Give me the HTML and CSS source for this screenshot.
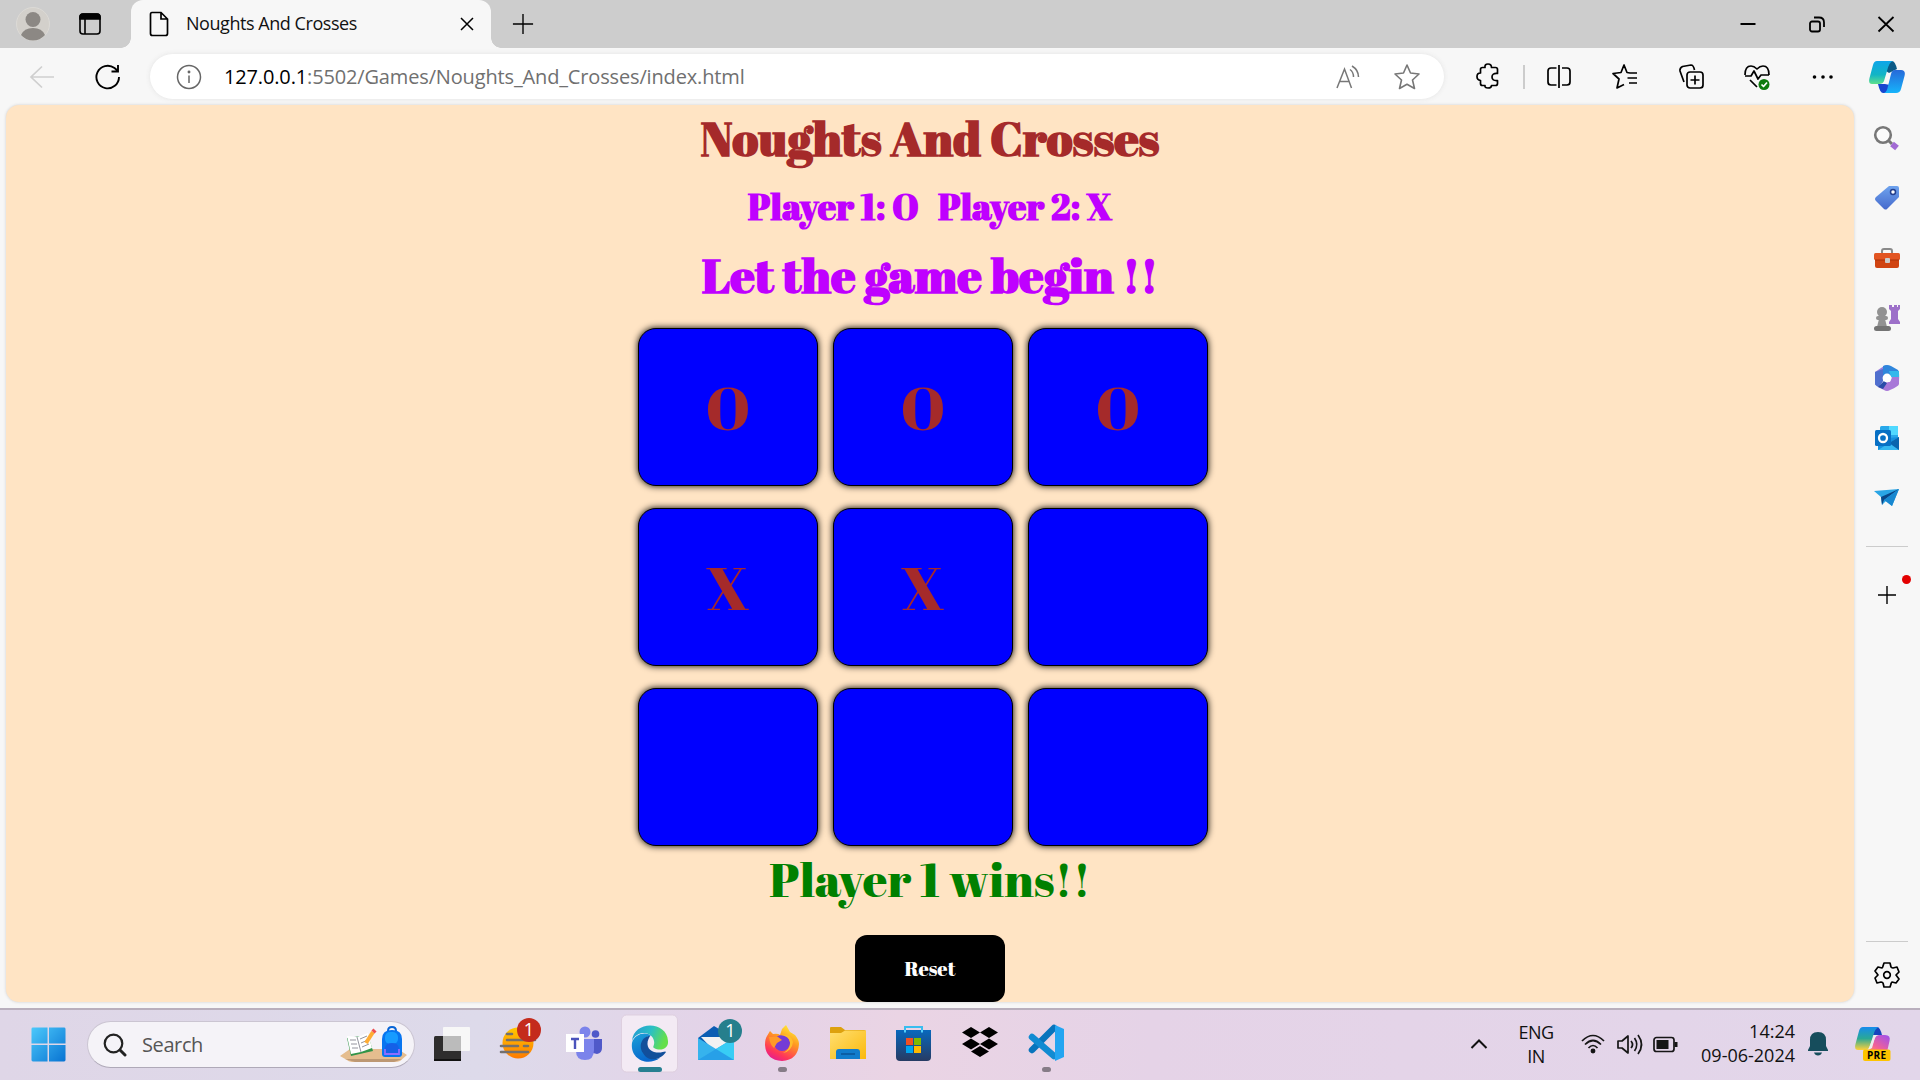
FILE: index.html
```html
<!DOCTYPE html>
<html lang="en">
<head>
<meta charset="utf-8">
<title>Noughts And Crosses</title>
<link rel="stylesheet" href="styles.css">
</head>
<body>
<header class="tabbar">
  <svg class="avatar" viewBox="0 0 34 34"><circle cx="17" cy="17" r="16.5" fill="#d3d0cb" stroke="#dcdad6"/><ellipse cx="17" cy="12.500" rx="7.500" ry="7.500" fill="#8c8884"/><path d="M5 28Q8 21 17 21T29 28Q24 33.500 17 33.500T5 28Z" fill="#8c8884"/></svg>
  <svg class="spaces" viewBox="0 0 24 24" fill="none" stroke="#000" stroke-width="1.600"><rect x="2" y="2" width="20" height="20" rx="3"/><path d="M2 5Q2 2 5 2H19Q22 2 22 5V7H2Z" fill="#000"/><path d="M7 7V22"/></svg>
  <div class="tab">
    <svg class="doc" viewBox="0 0 20 26" fill="none" stroke="#000" stroke-width="1.700"><path d="M3 1.500H12L18.500 8V22.500Q18.500 24.500 16.500 24.500H3.500Q1.500 24.500 1.500 22.500V3.500Q1.500 1.500 3 1.500ZM12 1.500V8H18.500"/></svg>
    <span class="tab-title">Noughts And Crosses</span>
    <svg class="tab-close" viewBox="0 0 14 14" stroke="#000" stroke-width="1.500"><path d="M1 1L13 13M13 1L1 13"/></svg>
  </div>
  <svg class="new-tab" viewBox="0 0 24 24" stroke="#000" stroke-width="1.500"><path d="M1 12H23M12 1V23"/></svg>
  <div class="window-buttons">
    <svg viewBox="0 0 20 20" stroke="#000" stroke-width="2"><path d="M2.500 10H17.500"/></svg>
    <svg viewBox="0 0 20 20" fill="none" stroke="#000" stroke-width="1.800"><rect x="3" y="7.500" width="10" height="10" rx="2"/><path d="M7 3.500H12Q17 3.500 17 8.500V13"/></svg>
    <svg viewBox="0 0 20 20" stroke="#000" stroke-width="1.800"><path d="M2.500 3L17.500 17.500M17.500 3L2.500 17.500"/></svg>
  </div>
</header>

<nav class="toolbar">
  <svg class="back" viewBox="0 0 26 24" fill="none" stroke="#cfcfcf" stroke-width="1.700"><path d="M25 12H2M13 1.500L2 12L13 22.500"/></svg>
  <svg class="reload" viewBox="0 0 28 28" fill="none" stroke="#000" stroke-width="1.900"><path d="M25 14A11.300 11.300 0 1 1 20.500 5L24 8M24 2V8.500H17.500"/></svg>
  <div class="address">
    <svg class="info" viewBox="0 0 26 26" fill="none" stroke="#666" stroke-width="1.500"><circle cx="13" cy="13" r="11.500"/><path d="M13 11.500V19"/><circle cx="13" cy="8" r=".7" fill="#666"/></svg>
    <span class="url"><b>127.0.0.1</b>:5502/Games/Noughts_And_Crosses/index.html</span>
    <svg class="read" viewBox="0 0 26 26" fill="none" stroke="#777" stroke-width="1.500"><path d="M2 24L9.500 5L16.500 24M5 17.500H14M15 5.500Q18.500 8 18.500 13M17 2Q23.500 6 23.500 13"/></svg>
    <svg class="star" viewBox="0 0 28 28" fill="none" stroke="#777" stroke-width="1.600" stroke-linejoin="round"><path d="M14 2L17.500 10L26 11L19.500 17L21.500 25.500L14 21.300L6.500 25.500L8.500 17L2 11L10.500 10Z"/></svg>
  </div>
  <div class="tools">
    <svg viewBox="-14 -14 28 28" class="ink"><path d="M-5.500-9.500H-3Q-3.500-13 0-13T3.500-9.500H7.500Q9.500-9.500 9.500-7.500V-3.500Q4-4 4 0T9.500 3.500V6.500Q9.500 8.500 7.500 8.500H3.500Q3.500 11 0 11T-3 8.500H-5.500Q-7.500 8.500-7.500 6.500V3.500Q-11 3-11-.5T-7.500-4V-7.500Q-7.500-9.500-5.500-9.500Z"/></svg>
    <i class="divider"></i>
    <svg viewBox="-14 -14 28 28" class="ink"><path d="M-2.500-9H-8Q-11-9-11-6V5Q-11 8-8 8H-2.500M3-9H8Q11-9 11-6V5Q11 8 8 8H3M0-12V11"/></svg>
    <svg viewBox="-14 -14 28 28" class="ink"><path d="M5-4L2-4.500L-1-12L-4-4.500L-12-3.500L-6 2L-8 11L-1 7.500M4-4H12M2.500 1H12M4 6H12"/></svg>
    <svg viewBox="-14 -14 28 28" class="ink"><rect x="-5" y="-5" width="16" height="16" rx="3"/><path d="M3-1.500V7.500M-1.500 3H7.500M-8 5L-12-6Q-12.500-9-9.500-10.500L-1-12Q1.500-12 2.500-7"/></svg>
    <svg viewBox="-14 -14 28 28" class="ink"><path d="M-12-2Q-12-11-6-11Q-3-11 0-8Q3-11 6-11Q12-11 12-2M-12-1H-6L-3-6L1 2L4-2H12M-7 3L0 10"/><circle cx="7" cy="7.500" r="5.500" fill="#107c10" stroke="none"/><path d="M4.500 7.500L6.500 9.500L10 5.500" stroke="#fff"/></svg>
    <svg viewBox="-14 -14 28 28"><circle cx="-8.500" r="1.800"/><circle r="1.800"/><circle cx="8" r="1.800"/></svg>
    <svg class="copilot" viewBox="0 0 36 32"><defs>
      <linearGradient id="cpA" x1="0" y1="0" x2="0" y2="1"><stop stop-color="#0ea5e9"/><stop offset=".6" stop-color="#12b5c5"/><stop offset="1" stop-color="#5fe08c"/></linearGradient>
      <linearGradient id="cpB" x1="0" y1="0" x2="0" y2="1"><stop stop-color="#2669d9"/><stop offset="1" stop-color="#16b4fb"/></linearGradient></defs>
      <path d="M20 0H23Q26 0 28 8L20 12L14 8Z" fill="#0b5a86"/><path d="M8 0H24Q20 1 18 10L15 20Q14 23 10 23H3Q-1 23 .5 17L4 4Q5 0 8 0Z" fill="url(#cpA)"/><path d="M9 23H16L21 24L19 32H14Q11 32 9 23Z" fill="#1746d0"/><path d="M26 9H32Q37 9 35.500 15L32 28Q31 32 27 32H15Q18 31 19 25L22 13Q23 9 26 9Z" fill="url(#cpB)"/></svg>
  </div>
</nav>

<div class="content">
  <main class="page">
    <h1 class="title">Noughts And Crosses</h1>
    <div class="players"><span>Player 1: O</span><span>Player 2: X</span></div>
    <h2 class="status">Let the game begin !!</h2>
    <div class="board">
      <div class="cell">O</div><div class="cell">O</div><div class="cell">O</div>
      <div class="cell">X</div><div class="cell">X</div><div class="cell"></div>
      <div class="cell"></div><div class="cell"></div><div class="cell"></div>
    </div>
    <div class="winner">Player 1 wins!!</div>
    <button class="reset">Reset</button>
  </main>
  <aside class="sidebar">
    <svg viewBox="-14 -14 28 28"><circle cx="-4" cy="-3" r="7.800" fill="#fff" fill-opacity=".5" stroke="#777" stroke-width="2.600"/><path d="M2 3L5 6" stroke="#777" stroke-width="3"/><path d="M5 6L10 10" stroke="#a26bd4" stroke-width="6"/></svg>
    <svg viewBox="-14 -14 28 28"><defs><linearGradient id="tg" x2="0" y2="1"><stop stop-color="#6ea3ee"/><stop offset="1" stop-color="#4569cc"/></linearGradient></defs><path d="M2-12H10Q12-12 12-10V-1L0 11Q-1 12-3 11L-11 3Q-13 1-11-1Z" fill="url(#tg)"/><circle cx="6" cy="-6" r="2.500" fill="#fff" stroke="#233f8e" stroke-width="1.500"/></svg>
    <svg viewBox="-14 -14 28 28"><path d="M-5-4V-7Q-5-9-3-9H3Q5-9 5-7V-4" fill="none" stroke="#8a8a8a" stroke-width="2"/><rect x="-12" y="-3" width="24" height="13" rx="2" fill="#d04412"/><rect x="-13" y="-5" width="26" height="7" rx="1.500" fill="#e25522"/><path d="M-12 2H12" stroke="#a9330b"/><rect x="-2" y="0" width="5" height="5" rx="1" fill="#ccc"/></svg>
    <svg viewBox="-14 -14 28 28"><g fill="#929292"><circle cx="-5" cy="-6" r="5"/><rect x="-11" y="-2" width="12" height="4" rx="2"/><path d="M-8 1H-2L0 9H-10Z"/><rect x="-13" y="8" width="17" height="5" rx="2.500" fill="#747474"/></g><path d="M2-13H5V-11H7V-13H10V-11H11V-13H13V-9L11-7V1L13 4V6H2V4L4 1V-7L2-9Z" fill="#9d70c9"/></svg>
    <svg viewBox="-14 -14 28 28"><path d="M-12-6L-3-12Q0-14 3-11L-3-3L-5 5L-12 7Z" fill="#9a7edb"/><path d="M-4-12Q0-14 4-12L11-8Q12.500-7 12 4L4-2L-1-4L-4-2Z" fill="#2f86dc"/><path d="M2-7L12-7V4L4-1Z" fill="#35b8eb"/><path d="M12-1V6Q12 8 3 12Q0 14-3 12L-9 9L-3 4H3L5-1Z" fill="#a878d8"/><path d="M-12 5V-6L-4-9V3L-8 9Q-12 8-12 5Z" fill="#506fce"/><path d="M-9 9L-3 3L0 5L-4 11Z" fill="#2b4da8"/><circle r="4.400" fill="#fff"/></svg>
    <svg viewBox="-14 -14 28 28"><rect x="-7" y="-12" width="18" height="17" rx="1.500" fill="#28a8ea"/><path d="M2-12H11V-3H2Z" fill="#50d9ff"/><path d="M-9 1L12-1V12H-9Z" fill="#1490df"/><path d="M-9 12L12-1V12Z" fill="#35b8f1"/><path d="M12 12L2 5L12-1Z" fill="#0a65ae"/><rect x="-12" y="-8" width="16" height="16" rx="1.500" fill="#0870c4"/><circle cx="-4" cy="0" r="4" fill="none" stroke="#fff" stroke-width="2.300"/></svg>
    <svg viewBox="-14 -14 28 28"><path d="M12-9L-13-7L-6-1L-5 7L-1 3L5 8Z" fill="#2aa5e5"/><path d="M12-9L-6-1L-5 7L-3 2Z" fill="#0a4687"/><path d="M12-9L-3 2L5 8Z" fill="#1787d0"/></svg>
    <i class="rule"></i>
    <svg class="add" viewBox="-10 -10 20 20"><path d="M-9 0H9M0-9V9" stroke="#000" stroke-width="1.400"/></svg>
    <i class="dot"></i>
    <div class="bottom"><i class="rule"></i>
    <svg viewBox="-14 -14 28 28" class="ink"><path d="M-3-12H3L4-8Q5-7 6-7L10-8L12-3L9 0L12 4L9 8L5 7Q4 8 4 9L3 12H-3L-4 8Q-5 7-6 7L-10 8L-12 3L-9 0L-12-4L-9-8L-5-7Q-4-8-4-9Z"/><circle r="3.300"/></svg></div>
  </aside>
</div>

<footer class="taskbar">
  <svg class="start" viewBox="0 0 36 36"><defs><linearGradient id="wn" x2="1" y2="1"><stop stop-color="#4cc9fb"/><stop offset="1" stop-color="#0873d2"/></linearGradient></defs><path d="M2 .5H17V17H.5V2Q.5 .5 2 .5ZM18.500 .5H34Q35.500 .5 35.500 2V17H18.500ZM.5 18.500H17V35.500H2Q.5 35.500 .5 34ZM18.500 18.500H35.500V34Q35.500 35.500 34 35.500H18.500Z" fill="url(#wn)"/></svg>
  <div class="search">
    <svg class="glass" viewBox="0 0 24 24" fill="none" stroke="#222"><circle cx="10.500" cy="10.500" r="8.800" stroke-width="2.200"/><path d="M17 17L22 22" stroke-width="3" stroke-linecap="round"/></svg>
    <span>Search</span>
    <svg class="school" viewBox="0 0 68 38"><path d="M0 30L10 23H58L67 29L60 35Q58 36 54 36H14Q9 36 7 34Z" fill="#e5bd8f"/><path d="M5 33L15 36H54L62 33Z" fill="#bd9873"/><path d="M7 12L28 9L33 25L11 30Z" fill="#319448"/><path d="M7 10L17 11L28 7L32 22L21 26L11 28Z" fill="#fff"/><path d="M17 11L21 26M10 14L16 14M11 18L17 18M12 22L18 22M20 13L27 10M21 17L28 14M22 21L29 18" stroke="#94949e"/><path d="M26 17L33 6" stroke="#ffac33" stroke-width="4"/><path d="M33 6L35 4" stroke="#ee4d51" stroke-width="4.500"/><path d="M48 5Q48 1 52 1T56 5" fill="none" stroke="#0865d6" stroke-width="2"/><path d="M42 13Q42 4 52 4T62 13V28Q62 31 59 31H45Q42 31 42 28Z" fill="#0875f0"/><rect x="45" y="6" width="13" height="12" rx="5" fill="#179bff"/><path d="M45 29V22Q46 17 52 17T59 22V29Z" fill="#1560e7"/><path d="M45 23V28H59V23" fill="none" stroke="#8c6dff" stroke-width="1.800"/></svg>
  </div>
  <div class="apps">
    <svg viewBox="0 0 66 60"><rect x="15" y="22" width="27" height="25" rx="1.500" fill="#2e2d2d"/><path d="M15 46H42" stroke="#111" stroke-width="2"/><rect x="24" y="13" width="27" height="24" rx="1" fill="#f7f7f7"/><path d="M24 22H42V37H24Z" fill="#bbb"/></svg>
    <svg viewBox="0 0 66 60"><defs><linearGradient id="or" x2="0" y2="1"><stop stop-color="#ffc900"/><stop offset="1" stop-color="#ff7b00"/></linearGradient></defs><circle cx="33" cy="29" r="15.500" fill="url(#or)"/><path d="M22 20H27M22 26H50M16 32H33M39 32H43M16 38H43" stroke="#74706d" stroke-width="2.600" stroke-linecap="round"/><circle cx="44" cy="16" r="12" fill="#c42b1c"/><text x="44" y="22" class="count">1</text></svg>
    <svg viewBox="0 0 66 60"><circle cx="34" cy="18" r="5.500" fill="#7b83eb"/><circle cx="44.500" cy="20" r="3.800" fill="#5059c9"/><path d="M35 25H51V34Q51 39 46 40L38 38Z" fill="#5059c9"/><path d="M25 25H43V36Q43 46 34 46Q25 46 25 37Z" fill="#7b83eb"/><rect x="15" y="20" width="18" height="18" fill="#fff"/><path d="M20 25H28M24 25V35" stroke="#4b53bc" stroke-width="2.400"/></svg>
    <svg viewBox="0 0 66 60" class="active"><defs><linearGradient id="ed" x2="1" y2=".3"><stop stop-color="#2398d5"/><stop offset=".55" stop-color="#2bc0c4"/><stop offset="1" stop-color="#64df4b"/></linearGradient><linearGradient id="ee" x2=".4" y2="1"><stop stop-color="#1ca1d7"/><stop offset="1" stop-color="#0867cd"/></linearGradient></defs><rect x="4.500" y="1" width="56" height="57" rx="5" fill="#f3eaf4" stroke="#decfdf"/><path d="M15 27C17 6 50 7 51 27C52 34 44 38 37 34C35 33 38 31 37 27C35 17 20 16 15 27Z" fill="url(#ed)"/><path d="M15 29C17 20 29 17 34 22C27 22 23 29 26 36C29 43 37 46 43 44C30 53 13 45 15 29Z" fill="url(#ee)"/><path d="M33 22C25 22 21 32 26 39C31 49 44 46 49 38C48 36 45 40 37 38C31 36 28 30 33 22Z" fill="#124f9b"/><rect x="21" y="53" width="24" height="5" rx="2.500" fill="#267f91"/></svg>
    <svg viewBox="0 0 66 60"><path d="M15 24L31 12L51 24V46H15Z" fill="#0b5db3"/><path d="M18 23H48V36L33 39Z" fill="#f2f2f2"/><path d="M15 24L51 46H15Z" fill="#36b3ed"/><path d="M15 46L51 24V46Z" fill="#27a0e8"/><path d="M33 35L51 24V46Z" fill="#38cdf5"/><circle cx="47" cy="17" r="12" fill="#267f8d"/><text x="47.500" y="23" class="count">1</text></svg>
    <svg viewBox="0 0 66 60"><defs><linearGradient id="ff" x1=".8" x2=".3" y2="1"><stop stop-color="#fff43a"/><stop offset=".4" stop-color="#ff9a20"/><stop offset=".8" stop-color="#ff3659"/><stop offset="1" stop-color="#e41d91"/></linearGradient></defs><path d="M18 22L21 17L24 20Q29 19 31 21L33 15L37 11L41 18L46 21Q50 26 50 30Q49 46 33 47Q17 46 16 31Q16 25 18 22Z" fill="url(#ff)"/><circle cx="33" cy="29" r="8" fill="#743bd6"/><path d="M20 23L29 23L33 26L28 29L25 34Q21 31 20 23Z" fill="#ff9928"/><path d="M31 21Q42 19 44 28Q43 37 34 39Q42 35 41 28Q40 22 31 21Z" fill="#ffbd2b"/><rect x="29" y="53" width="9" height="5" rx="2.500" fill="#867c87"/></svg>
    <svg viewBox="0 0 66 60"><defs><linearGradient id="fo" x2="1" y2="1"><stop stop-color="#ffdf72"/><stop offset="1" stop-color="#fbb90b"/></linearGradient></defs><path d="M15 14Q15 13 16 13H26L30 16H49Q51 16 51 18V24H15Z" fill="#dda10e"/><path d="M15 19H26L30 16.500H51V45H15Z" fill="url(#fo)"/><path d="M21 45V38Q21 35 24 35H42Q45 35 45 38V45Z" fill="#117ccc"/><path d="M26 40H40" stroke="#0b579b" stroke-width="1.600"/></svg>
    <svg viewBox="0 0 66 60"><defs><linearGradient id="st" x2="0" y2="1"><stop stop-color="#0868bd"/><stop offset="1" stop-color="#273b63"/></linearGradient></defs><path d="M24 18V13H41V18" fill="none" stroke="#39bdef" stroke-width="2"/><path d="M15 16H50V43Q50 47 46 47H19Q15 47 15 43Z" fill="url(#st)"/><path d="M24 16V18.500M41 16V18.500" stroke="#52cefb" stroke-width="2"/><path d="M25 24H32V31H25Z" fill="#f25022"/><path d="M33 24H40V31H33Z" fill="#7fba00"/><path d="M25 32H32V39H25Z" fill="#00a4ef"/><path d="M33 32H40V39H33Z" fill="#ffb900"/></svg>
    <svg viewBox="0 0 66 60"><path d="M24 13L33 18.500L24 24L15 18.500ZM42 13L51 18.500L42 24L33 18.500ZM24 24.500L33 30L24 35.500L15 30ZM42 24.500L51 30L42 35.500L33 30ZM33 32L42 37.500L33 43L24 37.500Z"/></svg>
    <svg viewBox="0 0 66 60"><path d="M19 36L41 14" stroke="#0874bc" stroke-width="6.500" stroke-linecap="round"/><path d="M19 23L41 42" stroke="#118bd2" stroke-width="6.500" stroke-linecap="round"/><path d="M42 11L51 15V43L42 47Z" fill="#24a5f1"/><path d="M42 22V37L32 29.500Z" fill="#ead7e7"/><rect x="29" y="53" width="9" height="5" rx="2.500" fill="#867c87"/></svg>
  </div>
  <div class="tray">
    <svg class="chev" viewBox="0 0 18 12" fill="none" stroke="#111" stroke-width="2"><path d="M1.500 10L9 2.500L16.500 10"/></svg>
    <div class="lang">ENG<br>IN</div>
    <svg class="status-icons" viewBox="0 0 100 24" fill="none" stroke="#161616" stroke-width="1.700"><path d="M2 9Q13-2 24 9M5 12.500Q13 4.500 21 12.500M8.500 16Q13 11 17.500 16"/><circle cx="13" cy="19" r="1.600" fill="#111"/><path d="M38 9H42L48 4V21L42 16H38Z" stroke-linejoin="round"/><path d="M51 9Q54 12.500 51 16M54.500 6Q59 12.500 54.500 19M58 3Q65 12.500 58 22"/><rect x="74" y="5.500" width="20" height="14" rx="2.500"/><rect x="76.500" y="8" width="12" height="9" fill="#161616" stroke="none"/><path d="M96 10V15" stroke-width="3"/></svg>
    <div class="clock">14:24<br>09-06-2024</div>
    <svg class="bell" viewBox="0 0 20 24" fill="#164d5c"><path d="M10 0Q18 0 18 8V14L20 18V19H0V18L2 14V8Q2 0 10 0ZM6 20.500H14Q13 23.500 10 23.500T6 20.500Z"/></svg>
    <svg class="pre" viewBox="0 0 36 36"><defs><linearGradient id="pa" x2="0" y2="1"><stop stop-color="#168bed"/><stop offset=".5" stop-color="#2aa996"/><stop offset="1" stop-color="#ffd13a"/></linearGradient><linearGradient id="pb" x1="1" x2="0" y2="1"><stop stop-color="#9b4ff1"/><stop offset=".6" stop-color="#f46295"/><stop offset="1" stop-color="#ffa452"/></linearGradient></defs><path d="M19 1H22Q25 1 27 9H18Z" fill="#1745bd"/><path d="M8 1H24Q20 2 18 10L15 20Q14 24 10 24H3Q-1 24 .5 18L4 5Q5 1 8 1Z" fill="url(#pa)"/><path d="M25 9H30Q36 9 34.500 15L32 26H8Q15 25 17 20L20 12Q21 9 25 9Z" fill="url(#pb)"/><path d="M19 9H23Q20 10 19 15L17 22L13 24Z" fill="#eee"/><rect x="8" y="23.500" width="27.500" height="11.500" rx="2" fill="#fdc400"/><text x="21.700" y="32.700" class="pre-text">PRE</text></svg>
  </div>
</footer>
</body>
</html>
```
FILE: styles.css
```css
* { box-sizing: border-box; }
body { margin: 0; width: 1920px; height: 1080px; overflow: hidden; display: flex; flex-direction: column; background: #f7f7f7; font-family: "Segoe UI", "Open Sans", "Noto Sans", sans-serif; color: #111; }
svg { display: block; flex: none; }
i { display: block; flex: none; }
.ink { fill: none; stroke: #000; stroke-width: 1.7; stroke-linejoin: round; }

.tabbar { height: 48px; flex: none; display: flex; align-items: center; background: #cdcdcd; padding-left: 16px; }
.avatar { width: 34px; height: 34px; }
.spaces { width: 24px; height: 24px; margin-left: 28px; }
.tab { width: 360px; height: 48px; margin-left: 29px; padding: 0 17px 0 18px; display: flex; align-items: center; background: #f7f7f7; border-radius: 12px 12px 0 0; position: relative; }
.tab::before, .tab::after { content: ""; position: absolute; bottom: 0; width: 10px; height: 10px; }
.tab::before { left: -10px; background: radial-gradient(circle at 0 0, #cdcdcd 9.5px, #f7f7f7 10px); }
.tab::after { right: -10px; background: radial-gradient(circle at 100% 0, #cdcdcd 9.5px, #f7f7f7 10px); }
.doc { width: 20px; height: 26px; }
.tab-title { margin-left: 17px; padding-bottom: 2px; font-size: 18px; letter-spacing: -0.45px; white-space: nowrap; }
.tab-close { width: 14px; height: 14px; margin-left: auto; }
.new-tab { width: 22px; height: 22px; margin-left: 21px; }
.window-buttons { display: flex; gap: 49px; margin-left: auto; margin-right: 24px; padding-bottom: 1px; }
.window-buttons svg { width: 20px; height: 20px; }

.toolbar { height: 57px; flex: none; display: flex; align-items: center; padding-left: 29px; }
.back { width: 26px; height: 24px; }
.reload { width: 28px; height: 28px; margin-left: 39px; }
.address { width: 1294px; height: 45px; margin-left: 28px; padding: 0 23px 0 26px; display: flex; align-items: center; background: #fff; border-radius: 23px; box-shadow: 0 0 5px #e3e3e3; }
.info { width: 26px; height: 26px; }
.url { margin-left: 22px; margin-right: auto; padding-bottom: 1px; font-size: 20px; letter-spacing: -0.15px; color: #707070; white-space: nowrap; }
.url b { font-weight: 400; color: #000; }
.read { width: 26px; height: 26px; margin-right: 32px; }
.star { width: 28px; height: 28px; }
.tools { display: grid; grid-template-columns: 65px 8px 62px 70px 64px 66px 66px 62px; align-items: center; justify-items: center; margin-left: 11px; }
.tools svg { width: 28px; height: 28px; }
.tools .copilot { width: 36px; height: 32px; }
.divider { width: 2px; height: 24px; background: #ccc; }

.content { height: 903px; flex: none; display: flex; padding-left: 6px; }
.page { width: 1848px; height: 897px; display: flex; flex-direction: column; align-items: center; background: #ffe4c4; border-radius: 13px; box-shadow: 0 0 3px #ccc; font-family: "Abril Fatface", "Liberation Serif", serif; font-weight: 400; white-space: nowrap; }
.title, .status, .winner { margin: 0; font-size: 48px; line-height: 60px; height: 60px; }
.title { margin-top: 3px; color: #a52a2a; font-weight: 700; }
.players { display: flex; gap: 19px; margin-top: 16px; height: 44px; font-size: 36px; font-weight: 700; line-height: 44px; color: #bf00ff; }
.status { margin-top: 17px; color: #bf00ff; font-weight: 700; }
.board { display: grid; grid-template-columns: repeat(3, 180px); grid-auto-rows: 158px; gap: 22px 15px; margin-top: 23px; margin-right: 14px; }
.cell { display: flex; align-items: center; justify-content: center; background: #00f; border: 1.5px solid #000; border-radius: 18px; box-shadow: 0 0 7px #000; color: #a52a2a; font-size: 60px; line-height: 64px; }
.winner { margin-top: 3px; color: #008000; }
.reset { width: 150px; height: 67px; margin-top: 26px; padding: 0; border: 0; border-radius: 12px; background: #000; color: #fff; font: 400 20px "Abril Fatface", "Liberation Serif", serif; }

.sidebar { width: 66px; display: flex; flex-direction: column; align-items: center; padding-top: 19px; position: relative; }
.sidebar svg { width: 28px; height: 28px; margin-bottom: 32px; }
.rule { width: 42px; height: 1px; background: #ccc; }
.sidebar > .rule { margin-top: 2px; }
.sidebar .add { width: 20px; height: 20px; margin-top: 38px; }
.dot { position: absolute; left: 48px; top: 470px; width: 9px; height: 9px; border-radius: 50%; background: #e30000; }
.bottom { margin-top: auto; height: 67px; display: flex; flex-direction: column; align-items: center; }
.bottom svg { margin: 19px 0 0; }

.taskbar { height: 72px; flex: none; display: flex; align-items: flex-start; padding-left: 31px; border-top: 2px solid #b9afbd; background: linear-gradient(90deg, #dfd6e7, #dddaea 25%, #e4d3e8 38%, #ead4e4 47%, #e5d3e7 60%, #e2d6ea); }
.start { width: 35px; height: 35px; margin-top: 17px; }
.search { width: 328px; height: 47px; margin: 11px 0 0 21px; padding: 0 6px 0 15px; display: flex; align-items: center; border: 1.5px solid #cbc5d2; border-bottom-color: #afa9b8; border-radius: 24px; background: #f5f3f8; color: #555; font-size: 20px; }
.glass { width: 24px; height: 24px; }
.search span { margin-left: 15px; letter-spacing: -.4px; }
.school { width: 68px; height: 38px; margin-left: auto; }
.apps { display: flex; margin-left: 4px; margin-top: 4px; }
.apps svg { width: 66px; height: 60px; }
.count { font-size: 18px; fill: #fff; text-anchor: middle; }
.tray { flex: 1; height: 68px; display: flex; align-items: center; font-size: 18px; line-height: 24px; }
.chev { width: 18px; height: 12px; margin-left: 391px; }
.lang { width: 60px; margin-left: 18px; padding-bottom: 1px; text-align: center; letter-spacing: -.5px; }
.status-icons { width: 100px; height: 24px; margin-left: 14px; }
.clock { width: 110px; margin-left: 5px; padding-bottom: 2px; text-align: right; letter-spacing: 0; }
.bell { width: 20px; height: 24px; margin-left: 13px; }
.pre { width: 36px; height: 36px; margin-left: 27px; }
.pre-text { font: 700 10px "Open Sans", sans-serif; letter-spacing: .3px; text-anchor: middle; }
```
